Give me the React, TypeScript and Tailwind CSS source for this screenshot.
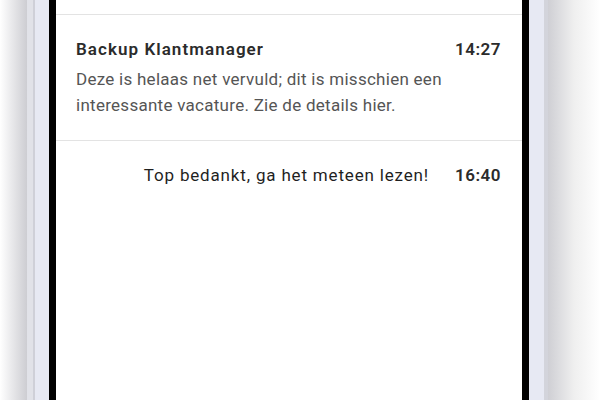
import React from "react";

export default function App() {
  const font = { fontFamily: "Roboto, 'Noto Sans', sans-serif" };
  return (
    <div className="w-[600px] h-[400px] flex bg-white overflow-hidden" style={font}>
      <div className="w-[27px] h-full bg-gradient-to-r from-white to-[#cdcdd2]" />
      <div className="w-[521px] h-full flex bg-[#e7e9f3] border-l-[6px] border-l-[#e1e2e8] border-r-[4px] border-r-[#d3d4db]">
        <div className="w-[2px] h-full bg-[#cfd0d8]" />
        <div className="w-[14px] h-full" />
        <div className="flex-1 h-full flex bg-black px-[7px]">
          <div className="flex-1 h-full bg-white flex flex-col">
            <div className="h-[15px] border-b border-[#e3e3e3]" />
            <div className="border-b border-[#e3e3e3] pl-[20px] pr-[21px] pt-[23px] pb-[22px]">
              <div className="flex justify-between items-center">
                <span className="text-[17px] font-semibold text-[#2b2b2b] leading-[22px] tracking-[1.05px]">Backup Klantmanager</span>
                <span className="text-[17px] font-semibold text-[#2b2b2b] leading-[22px] tracking-[0.5px]">14:27</span>
              </div>
              <p className="mt-[6px] text-[17px] leading-[26px] text-[#555555] tracking-[0.27px] pr-[40px]">
                Deze is helaas net vervuld; dit is misschien een interessante vacature. Zie de details hier.
              </p>
            </div>
            <div className="flex justify-end items-center gap-[26px] pr-[21px] pt-[23px]">
              <span className="text-[17px] leading-[22px] text-[#1f1f1f] tracking-[0.83px]">Top bedankt, ga het meteen lezen!</span>
              <span className="text-[17px] font-semibold leading-[22px] text-[#2b2b2b] tracking-[0.5px]">16:40</span>
            </div>
          </div>
        </div>
        <div className="w-[15px] h-full" />
      </div>
      <div className="flex-1 h-full bg-gradient-to-r from-[#cfcfd4] via-[#efefef] to-white" />
    </div>
  );
}
